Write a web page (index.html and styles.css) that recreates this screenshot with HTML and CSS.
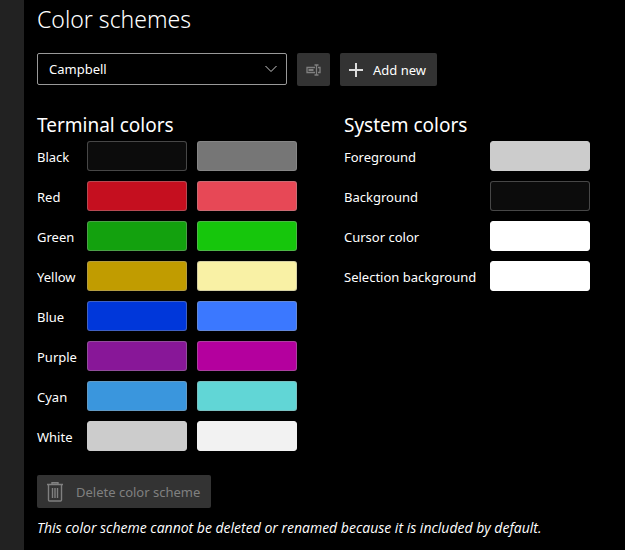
FILE: index.html
```html
<!DOCTYPE html>
<html lang="en">
<head>
<meta charset="utf-8">
<meta name="viewport" content="width=device-width, initial-scale=1">
<title>Color schemes</title>
<link rel="stylesheet" href="styles.css">
</head>
<body>
<div class="app">
  <aside class="rail"></aside>
  <main class="page">
    <h1 class="title" id="title">Color schemes</h1>

    <div class="toolbar">
      <div class="picker">
        <select class="picker-select" aria-labelledby="title">
          <option>Campbell</option>
        </select>
        <svg class="picker-arrow" viewBox="0 0 14 8" width="14" height="8" aria-hidden="true"><path d="M1.5 1 L7 6.5 L12.500 1"/></svg>
      </div>
      <button class="button button-icon" type="button" aria-label="Rename" disabled>
        <svg class="icon icon-rename" viewBox="0 0 15 12" width="15" height="12" aria-hidden="true">
          <path d="M9 3.500H1v5h8M12 3.500h2v5h-2M8.500 1h4M8.500 11h4M10.500 1v10"/>
          <path class="icon-fill" d="M2.500 5h5v2h-5z"/>
        </svg>
      </button>
      <button class="button button-add" type="button">
        <svg class="icon icon-plus" viewBox="0 0 14 14" width="14" height="14" aria-hidden="true"><path d="M7 0v14M0 7h14"/></svg>
        <span>Add new</span>
      </button>
    </div>

    <div class="groups">
      <section class="group">
        <h2 class="subtitle">Terminal colors</h2>
        <div class="colors terminal">
          <span class="name" id="black">Black</span><button class="swatch black" aria-labelledby="black"></button><button class="swatch bright-black" aria-labelledby="black"></button>
          <span class="name" id="red">Red</span><button class="swatch red" aria-labelledby="red"></button><button class="swatch bright-red" aria-labelledby="red"></button>
          <span class="name" id="green">Green</span><button class="swatch green" aria-labelledby="green"></button><button class="swatch bright-green" aria-labelledby="green"></button>
          <span class="name" id="yellow">Yellow</span><button class="swatch yellow" aria-labelledby="yellow"></button><button class="swatch bright-yellow" aria-labelledby="yellow"></button>
          <span class="name" id="blue">Blue</span><button class="swatch blue" aria-labelledby="blue"></button><button class="swatch bright-blue" aria-labelledby="blue"></button>
          <span class="name" id="purple">Purple</span><button class="swatch purple" aria-labelledby="purple"></button><button class="swatch bright-purple" aria-labelledby="purple"></button>
          <span class="name" id="cyan">Cyan</span><button class="swatch cyan" aria-labelledby="cyan"></button><button class="swatch bright-cyan" aria-labelledby="cyan"></button>
          <span class="name" id="white">White</span><button class="swatch white" aria-labelledby="white"></button><button class="swatch bright-white" aria-labelledby="white"></button>
        </div>
      </section>
      <section class="group">
        <h2 class="subtitle">System colors</h2>
        <div class="colors system">
          <span class="name" id="foreground">Foreground</span><button class="swatch white" aria-labelledby="foreground"></button>
          <span class="name" id="background">Background</span><button class="swatch black" aria-labelledby="background"></button>
          <span class="name" id="cursor">Cursor color</span><button class="swatch pure-white" aria-labelledby="cursor"></button>
          <span class="name" id="selection">Selection background</span><button class="swatch pure-white" aria-labelledby="selection"></button>
        </div>
      </section>
    </div>

    <button class="button button-delete" type="button" disabled>
      <svg class="icon icon-trash" viewBox="0 0 18 20" width="18" height="20" aria-hidden="true">
        <path d="M1 2.500h16M6 2.500V.8h6v1.700M2.500 3v15q0 1 1 1h11q1 0 1-1V3M6.500 6v10M9 6v10M11.500 6v10"/>
      </svg>
      <span>Delete color scheme</span>
    </button>
    <p class="note">This color scheme cannot be deleted or renamed because it is included by default.</p>
  </main>
</div>
</body>
</html>
```
FILE: styles.css
```css
* {
  box-sizing: border-box;
}

body {
  margin: 0;
  background: #000;
  color: #fff;
  font: 13px/20px "Noto Sans", "Open Sans", sans-serif;
}

.app {
  display: flex;
  min-height: 100vh;
}

.rail {
  flex: 0 0 24px;
  background: #222;
}

.page {
  flex: 1;
  padding: 3px 12px 0 13px;
}

.title {
  margin: 0 0 18px;
  font-size: 23px;
  font-weight: 300;
  line-height: 32px;
}

.toolbar {
  display: flex;
  gap: 10px;
}

.picker {
  position: relative;
  flex: 0 1 250px;
}

.picker-select {
  width: 100%;
  height: 32px;
  padding: 0 32px 0 11px;
  border: 1px solid #999;
  border-radius: 2px;
  appearance: none;
  background: #000;
  color: #fff;
  font: inherit;
}

.picker-arrow {
  position: absolute;
  top: 12px;
  right: 9px;
  fill: none;
  stroke: #ccc;
  pointer-events: none;
}

.button {
  display: flex;
  align-items: center;
  height: 33px;
  padding: 0 11px 0 9px;
  border: 0;
  border-radius: 2px;
  background: #333;
  color: #fff;
  font: inherit;
  white-space: nowrap;
}

.button:disabled {
  color: #808080;
}

.button-icon {
  width: 33px;
  padding: 0;
  justify-content: center;
}

.button-add {
  gap: 10px;
}

.button-delete {
  gap: 12px;
  margin-top: 24px;
}

.icon {
  flex: none;
  fill: none;
  stroke: currentColor;
}

.icon-fill {
  fill: currentColor;
  stroke: none;
}

.icon-rename {
  stroke-width: 1.3;
}

.icon-plus {
  stroke: #ddd;
  stroke-width: 2;
}

.icon-trash {
  stroke-width: 1.4;
}

.groups {
  display: flex;
  gap: 47px;
  margin-top: 25px;
}

.subtitle {
  margin: 0 0 2px;
  font-size: 19px;
  font-weight: 400;
  line-height: 28px;
}

.colors {
  display: grid;
  grid-auto-rows: 30px;
  gap: 10px;
  align-items: center;
  white-space: nowrap;
}

.name {
  padding-top: 2px;
}

.terminal {
  grid-template-columns: 40px 100px 100px;
}

.system {
  grid-template-columns: 136px 100px;
}

.swatch {
  height: 30px;
  padding: 0;
  border: 1px solid rgba(160, 160, 160, 0.4);
  border-radius: 3px;
}

.black { background: #0c0c0c; }
.bright-black { background: #767676; }
.red { background: #c50f1f; }
.bright-red { background: #e74856; }
.green { background: #13a10e; }
.bright-green { background: #16c60c; }
.yellow { background: #c19c00; }
.bright-yellow { background: #f9f1a5; }
.blue { background: #0037da; }
.bright-blue { background: #3b78ff; }
.purple { background: #881798; }
.bright-purple { background: #b4009e; }
.cyan { background: #3a96dd; }
.bright-cyan { background: #61d6d6; }
.white { background: #ccc; border-color: #ccc; }
.bright-white { background: #f2f2f2; border-color: #f2f2f2; }
.pure-white { background: #fff; border-color: #fff; }

.note {
  margin: 10px 0 0;
  font-family: "Open Sans", "Noto Sans", sans-serif;
  font-size: 14px;
  font-style: italic;
}
```
